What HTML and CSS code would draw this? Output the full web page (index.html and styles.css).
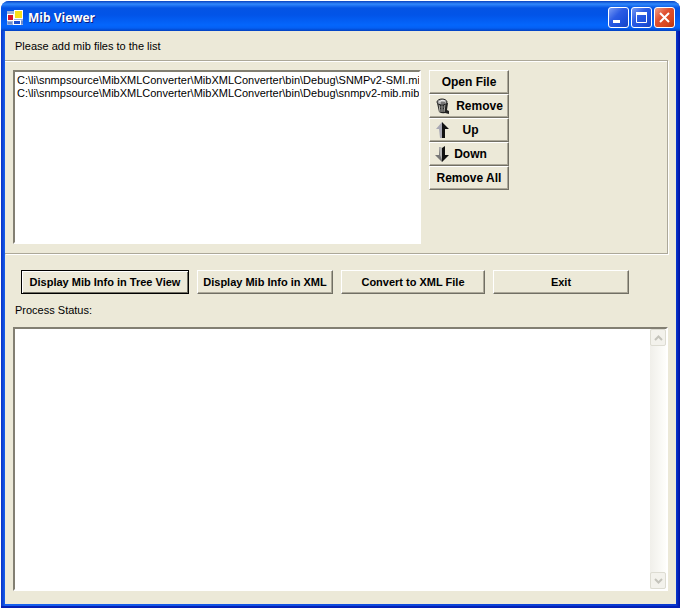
FILE: index.html
```
<!DOCTYPE html>
<html lang="en">
<head>
    <meta charset="UTF-8">
    <meta name="viewport" content="width=device-width, initial-scale=1.0">
    <title>Mib Viewer</title>
    <link rel="stylesheet" href="styles.css">
</head>
<body>
    <div class="window">
        <header class="title-bar">
            <svg class="app-icon" width="16" height="16" viewBox="0 0 16 16" aria-hidden="true">
                <rect x="0" y="1" width="16" height="14" fill="#9fb4dc"/>
                <rect x="0" y="4" width="7" height="7" fill="#fff"/>
                <rect x="1" y="5" width="5" height="5" fill="#d8142c"/>
                <rect x="7" y="0" width="9" height="9" fill="#fff"/>
                <rect x="8" y="1" width="7" height="7" fill="#f8e018"/>
                <rect x="6" y="10" width="8" height="5" fill="#fff"/>
                <rect x="7" y="11" width="6" height="3" fill="#1c50d0"/>
                <path d="M1 13h4M15 11v3" stroke="#3a60b8"/>
            </svg>
            <h1>Mib Viewer</h1>
            <button class="caption" type="button" aria-label="Minimize">
                <svg width="19" height="19" viewBox="0 0 19 19"><path d="M4 13.500h7" stroke="#fff" stroke-width="3"/></svg>
            </button>
            <button class="caption" type="button" aria-label="Maximize">
                <svg width="19" height="19" viewBox="0 0 19 19"><path d="M4 5.500h11" stroke="#fff" stroke-width="3"/><path d="M4.500 5v9.500h10V5" fill="none" stroke="#fff"/></svg>
            </button>
            <button class="caption close" type="button" aria-label="Close">
                <svg width="19" height="19" viewBox="0 0 19 19"><path d="M5 5l9 9M14 5l-9 9" stroke="#fff" stroke-width="2"/></svg>
            </button>
        </header>

        <main class="client">
            <label class="hint" for="files">Please add mib files to the list</label>

            <section class="group">
                <select class="file-list" id="files" size="2">
                    <option>C:\li\snmpsource\MibXMLConverter\MibXMLConverter\bin\Debug\SNMPv2-SMI.mib</option>
                    <option>C:\li\snmpsource\MibXMLConverter\MibXMLConverter\bin\Debug\snmpv2-mib.mib</option>
                </select>
                <div class="file-actions">
                    <button class="btn" type="button">Open File</button>
                    <button class="btn with-icon remove" type="button">
                        <svg width="16" height="16" viewBox="0 0 16 16" aria-hidden="true">
                            <path d="M2 5l2 9q3 2 6 1l4 1v-3l-2-1 1-7z" fill="#222"/>
                            <path d="M4 6l1 8M7 7v7M10 6l-1 8" stroke="#b8b8b0"/>
                            <path d="M5 9h5M5 12h4" stroke="#777"/>
                            <ellipse cx="7" cy="4" rx="5" ry="3" fill="#aaa" stroke="#222"/>
                            <path d="M4 4q3-3 6-1" fill="none" stroke="#eee"/>
                            <path d="M6 5h4" stroke="#444"/>
                        </svg>
                        <span>Remove</span>
                    </button>
                    <button class="btn with-icon" type="button">
                        <svg width="16" height="16" viewBox="0 0 16 16" aria-hidden="true">
                            <path d="M7 0L1 7h3l1 9h2z" fill="#a8a8b4"/>
                            <path d="M7 0l7 7h-4v9H7z" fill="#111"/>
                        </svg>
                        <span>Up</span>
                    </button>
                    <button class="btn with-icon" type="button">
                        <svg width="16" height="16" viewBox="0 0 16 16" aria-hidden="true">
                            <path d="M7 16L0 9h4V1l3 1z" fill="#777"/>
                            <path d="M4 1l3 1v12L5 9z" fill="#b4b4b4"/>
                            <path d="M7 16l7-7h-4V0L7 2z" fill="#111"/>
                        </svg>
                        <span>Down</span>
                    </button>
                    <button class="btn" type="button">Remove All</button>
                </div>
            </section>

            <div class="commands">
                <button class="btn tree default" type="button">Display Mib Info in Tree View</button>
                <button class="btn xml" type="button">Display Mib Info in XML</button>
                <button class="btn convert" type="button">Convert to XML File</button>
                <button class="btn exit" type="button">Exit</button>
            </div>

            <label class="status-label" for="status">Process Status:</label>
            <div class="status">
                <textarea id="status" readonly></textarea>
                <div class="scroll">
                    <button type="button" aria-label="Scroll up">
                        <svg width="9" height="6" viewBox="0 0 9 6"><path d="M1 5l3.500-3.500L8 5" fill="none" stroke="#c4c3bb" stroke-width="2"/></svg>
                    </button>
                    <button type="button" aria-label="Scroll down">
                        <svg width="9" height="6" viewBox="0 0 9 6"><path d="M1 1l3.500 3.500L8 1" fill="none" stroke="#c4c3bb" stroke-width="2"/></svg>
                    </button>
                </div>
            </div>
        </main>
    </div>
</body>
</html>
```
FILE: styles.css
```
* {
    box-sizing: border-box;
}
body {
    margin: 0;
    padding: 1px;
    min-height: 100vh;
    display: flex;
    background: #fff;
    font-family: "Liberation Sans", Arial, sans-serif;
    font-size: 11px;
    line-height: 14px;
    color: #000;
}
button, select, textarea {
    font: inherit;
    color: inherit;
    margin: 0;
}
.window {
    flex: 1;
    min-width: 0;
    display: flex;
    flex-direction: column;
    padding: 0 4px 2px;
    background: linear-gradient(90deg, #0831c4, #1660ee 4px, #0838d0 calc(100% - 4px), #0010a0);
    border-bottom: 2px solid #0420b4;
    border-radius: 8px 8px 0 0;
}
.title-bar {
    display: flex;
    align-items: center;
    gap: 2px;
    height: 30px;
    margin: 0 -4px;
    padding: 3px 5px 0 6px;
    border-radius: 8px 8px 0 0;
    background: linear-gradient(#0842c0, #3088fc 3px, #0454e4 7px, #0254e8 14px, #0466fc 24px, #0460f4 27px, #0240c0);
}
.title-bar h1 {
    flex: 1;
    margin: 0 0 0 3px;
    font-family: "Open Sans", sans-serif;
    font-size: 12px;
    font-weight: 700;
    color: #fff;
    text-shadow: 1px 1px #0a1c80;
}
.caption {
    width: 21px;
    height: 21px;
    padding: 0;
    border: 1px solid #fff;
    border-radius: 3px;
    background: linear-gradient(135deg, #7a9cf4, #2c5ce4 40%, #1c50dc 70%, #1844c0);
}
.caption svg {
    display: block;
}
.caption.close {
    background: linear-gradient(135deg, #f0a088, #e05030 40%, #d84820 70%, #b83410);
}
.client {
    flex: 1;
    display: flex;
    flex-direction: column;
    padding: 8px 8px 13px 0;
    background: #ece9d8;
}
.hint, .status-label {
    padding-left: 10px;
}
.group {
    display: flex;
    gap: 8px;
    margin-top: 7px;
    padding: 9px 8px;
    border: 1px solid #aca899;
    border-left: 0;
    box-shadow: 1px 1px #fff, inset 0 1px #fff;
}
.file-list {
    flex: 0 1 408px;
    min-width: 0;
    height: 174px;
    padding: 2px 0 0;
    border: 2px solid;
    border-color: #827f72 #fff #fff #827f72;
    border-radius: 0;
    background: #fff;
    overflow: hidden;
    outline: 0;
}
.file-list option {
    min-height: 13px;
    padding: 0 2px;
    line-height: 13px;
}
.file-actions {
    display: flex;
    flex-direction: column;
    width: 80px;
}
.btn {
    height: 24px;
    padding: 0;
    border: 1px solid;
    border-color: #fff #716f64 #716f64 #fff;
    box-shadow: inset -1px -1px #aca899;
    background: #ece9d8;
    font-weight: 700;
    white-space: nowrap;
}
.file-actions .btn {
    font-size: 12px;
}
.with-icon {
    display: flex;
    align-items: center;
    padding: 0 18px 0 5px;
}
.with-icon.remove {
    padding-right: 0;
}
.with-icon span {
    flex: 1;
}
.commands {
    display: flex;
    gap: 8px;
    margin: 16px 0 0 16px;
}
.default {
    border-color: #000;
    box-shadow: inset 1px 1px #fff, inset -1px -1px #716f64;
}
.tree {
    width: 168px;
}
.xml {
    width: 136px;
}
.convert {
    width: 144px;
}
.exit {
    width: 136px;
}
.status-label {
    margin-top: 9px;
}
.status {
    flex: 1;
    display: flex;
    margin: 10px 0 0 8px;
    border: 2px solid;
    border-color: #827f72 #fff #fff #827f72;
    background: #fff;
}
.status textarea {
    flex: 1;
    min-width: 0;
    min-height: 200px;
    padding: 2px;
    border: 0;
    outline: 0;
    background: #fff;
    resize: none;
}
.scroll {
    display: flex;
    flex-direction: column;
    justify-content: space-between;
    width: 16px;
    background: linear-gradient(90deg, #f0efea, #fefefb);
}
.scroll button {
    display: flex;
    align-items: center;
    justify-content: center;
    height: 17px;
    padding: 0;
    border: 1px solid #dddcd2;
    border-radius: 2px;
    background: #f3f2ec;
}
```
